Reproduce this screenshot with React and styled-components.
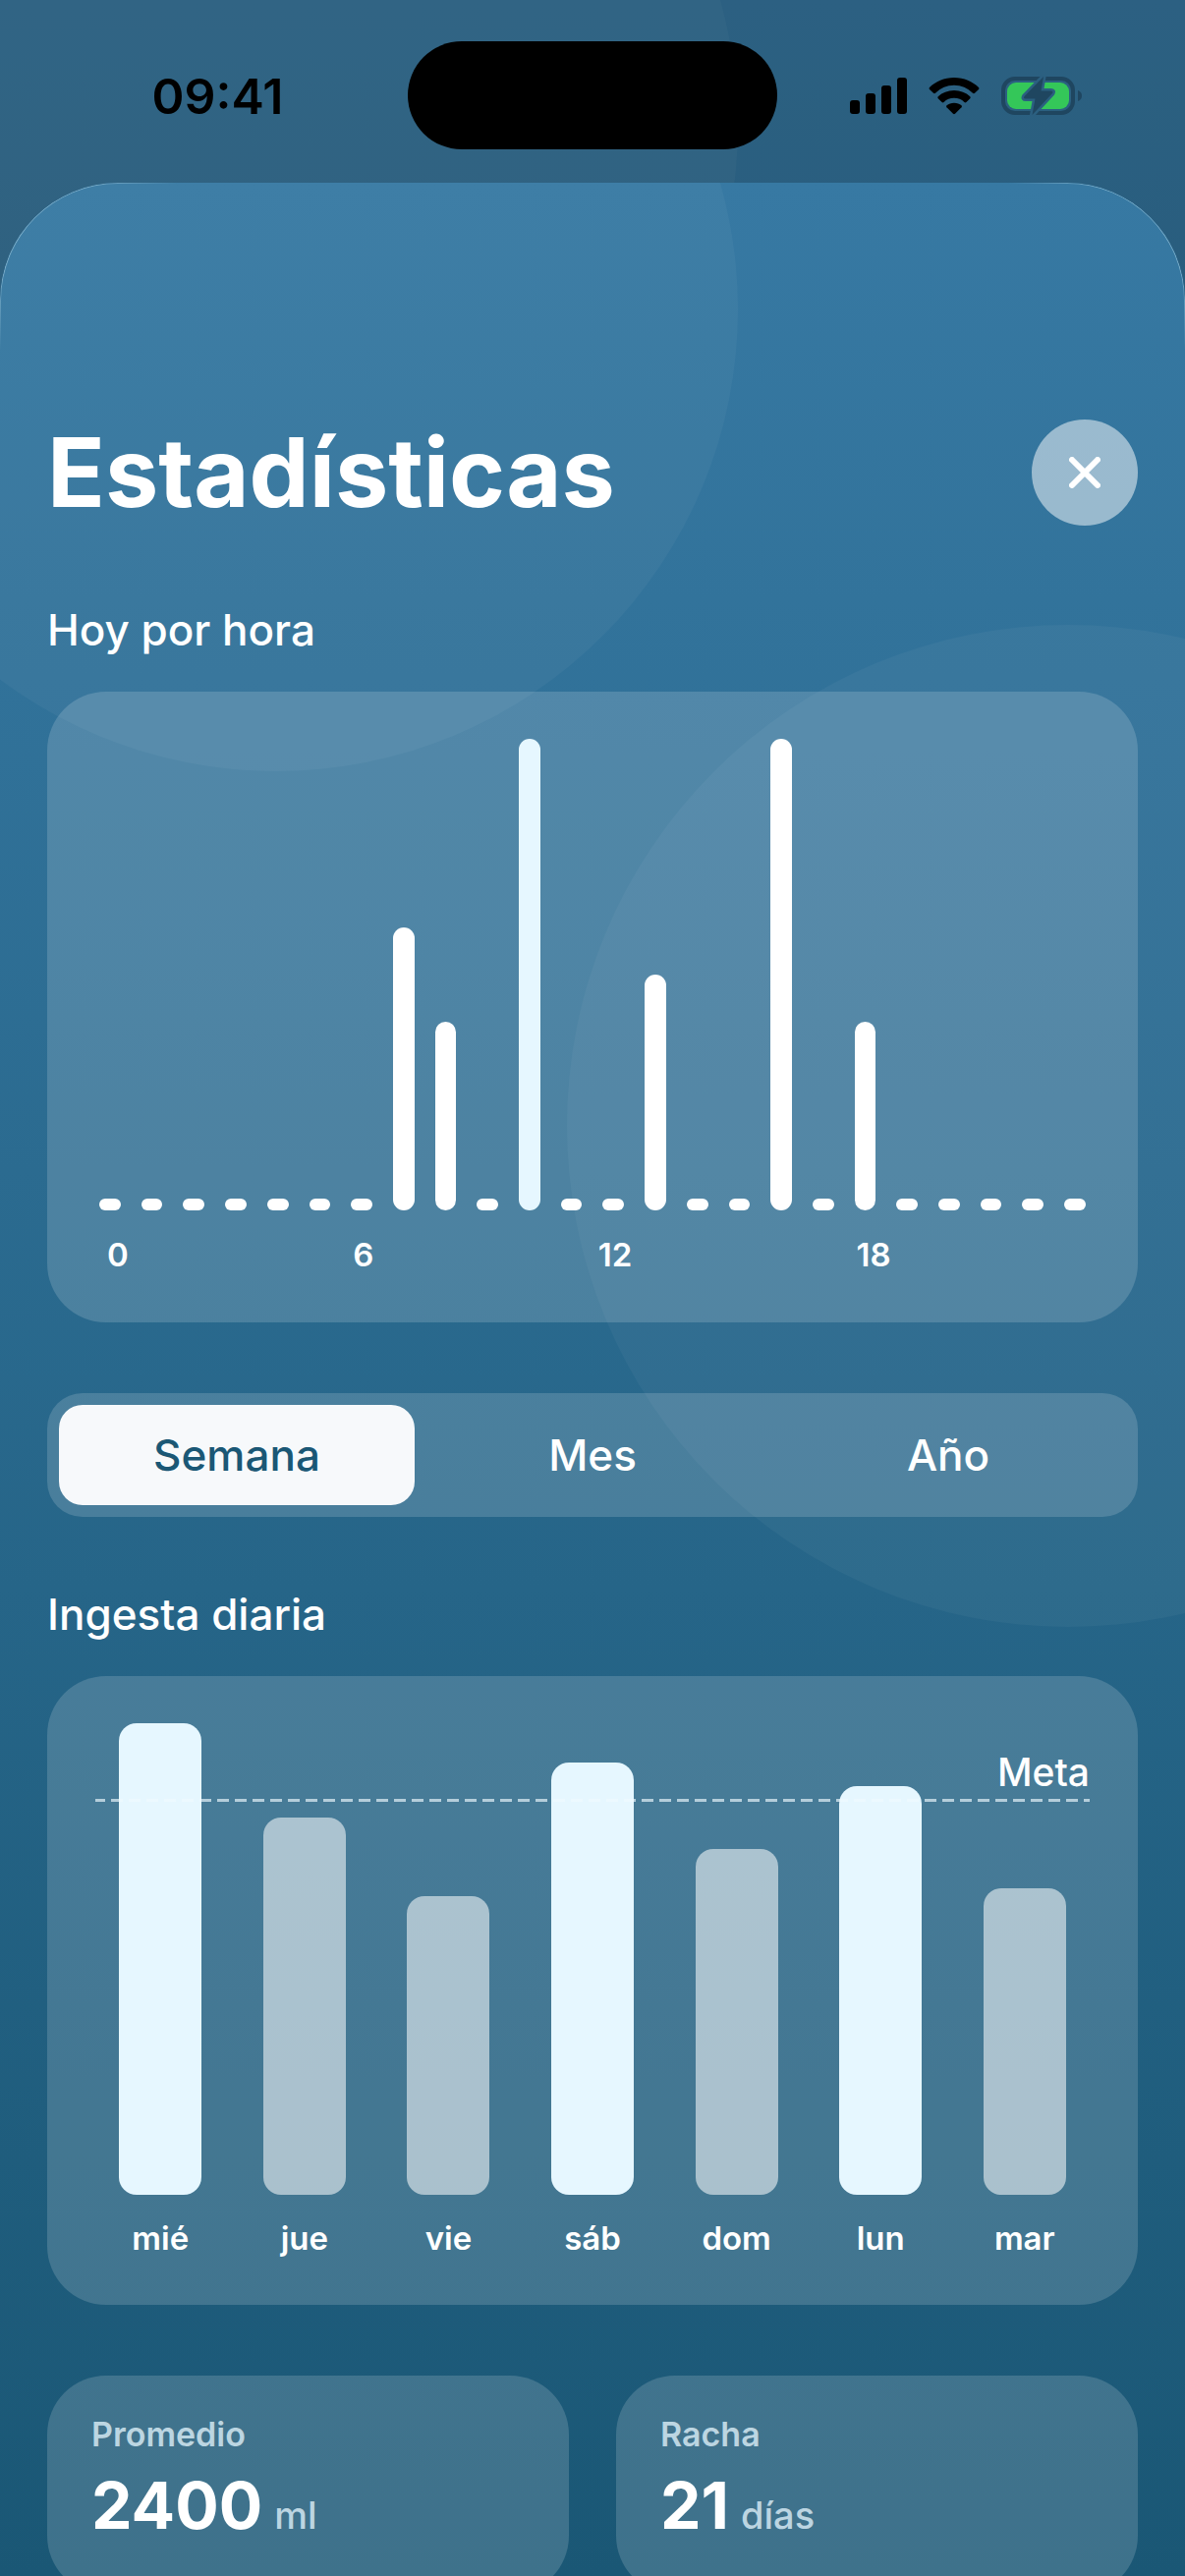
import React, { useState } from "react";
import styled, { createGlobalStyle } from "styled-components";

const hours = Array.from({ length: 24 }, (_, hour) => ({ hour, value: 0 }));
hours[7].value = 60;
hours[8].value = 40;
hours[10].value = 100;
hours[13].value = 50;
hours[16].value = 100;
hours[18].value = 40;

const currentHour = 10;
const goal = 2500;
const maxIntake = 3000;

const days = [
  { day: "mié", ml: 3000 },
  { day: "jue", ml: 2400 },
  { day: "vie", ml: 1900 },
  { day: "sáb", ml: 2750 },
  { day: "dom", ml: 2200 },
  { day: "lun", ml: 2600 },
  { day: "mar", ml: 1950 },
];

const ranges = ["Semana", "Mes", "Año"];

const stats = [
  { label: "Promedio", value: "2400", unit: "ml" },
  { label: "Racha", value: "21", unit: "días" },
];

const SignalIcon = () => (
  <svg width="58" height="38" viewBox="0 0 58 38" aria-hidden="true">
    <rect x="0" y="23" width="10" height="14" rx="3" />
    <rect x="16" y="16" width="10" height="21" rx="3" />
    <rect x="32" y="8" width="10" height="29" rx="3" />
    <rect x="48" y="0" width="10" height="37" rx="3" />
  </svg>
);

const WifiIcon = () => (
  <svg width="52" height="38" viewBox="0 0 52 38" aria-hidden="true">
    <path d="M26 0C36 0 45 4 51 10Q52 11 51 12L47 15.800Q46 16.500 45 15.800C39.500 10.500 33.500 7.800 26 7.800S12.500 10.500 7 15.800Q6 16.500 5 15.800L1 12Q0 11 1 10C7 4 16 0 26 0Z" />
    <path d="M26 13C32.500 13 38 15.300 42.300 19.200Q43.200 20.200 42.300 21.200L38.400 25Q37.400 25.800 36.400 25C33.600 22.200 30.200 20.800 26 20.800S18.400 22.200 15.600 25Q14.600 25.800 13.600 25L9.700 21.200Q8.800 20.200 9.700 19.200C14 15.300 19.500 13 26 13Z" />
    <path d="M26 25.800C29 25.800 31.500 26.800 33.500 28.300Q34.500 29.300 33.500 30.300L27 36.700Q26 37.600 25 36.700L18.500 30.300Q17.500 29.300 18.500 28.300C20.500 26.800 23 25.800 26 25.800Z" />
  </svg>
);

const BatteryIcon = () => (
  <svg width="82" height="42" viewBox="0 0 82 42" aria-hidden="true">
    <rect x="2" y="3" width="71" height="35" rx="12" fill="none" stroke="#1f4660" strokeWidth="4" />
    <path d="M78 15C81 16 82 18 82 20.500S81 25 78 26Z" fill="#1f4660" />
    <rect x="6" y="7" width="63" height="27" rx="9" fill="#34c759" />
    <path
      d="M43 1L23.500 21Q22 23.500 25 23.500H34.500L31.500 40L52 18Q53.500 15.500 50.500 15.500H40.500Z"
      fill="#1f4660"
      stroke="#2b5f80"
      strokeWidth="5"
      strokeLinejoin="round"
      paintOrder="stroke"
    />
  </svg>
);

const CloseIcon = () => (
  <svg width="32" height="32" viewBox="0 0 32 32" aria-hidden="true">
    <path d="M3 3L29 29M29 3L3 29" stroke="#fff" strokeWidth="6" strokeLinecap="round" />
  </svg>
);

const App = () => {
  const [range, setRange] = useState("Semana");

  return (
    <Screen>
      <GlobalStyle />
      <Backdrop>
        <TopBubble />
      </Backdrop>
      <StatusBar>
        <Time>09:41</Time>
        <Island />
        <StatusIcons>
          <SignalIcon />
          <WifiIcon />
          <BatteryIcon />
        </StatusIcons>
      </StatusBar>
      <Sheet>
        <TopBubble />
        <SideBubble />
        <Content>
          <Header>
            <Title>Estadísticas</Title>
            <CloseButton type="button" aria-label="Cerrar">
              <CloseIcon />
            </CloseButton>
          </Header>

          <SectionTitle>Hoy por hora</SectionTitle>
          <ChartCard>
            <HourBars>
              {hours.map(({ hour, value }) => (
                <HourBar key={hour} $current={hour === currentHour} style={{ height: `${value}%` }} />
              ))}
            </HourBars>
            <HourLabels>
              {hours.map(({ hour }) => (
                <HourLabel key={hour}>{hour % 6 === 0 ? hour : ""}</HourLabel>
              ))}
            </HourLabels>
          </ChartCard>

          <Segments>
            {ranges.map((name) => (
              <Segment
                key={name}
                type="button"
                aria-pressed={range === name}
                $active={range === name}
                onClick={() => setRange(name)}
              >
                {name}
              </Segment>
            ))}
          </Segments>

          <SectionTitle>Ingesta diaria</SectionTitle>
          <ChartCard>
            <DayBars>
              {days.map(({ day, ml }) => (
                <DayColumn key={day}>
                  <DayBar $reached={ml >= goal} style={{ height: `${(ml / maxIntake) * 100}%` }} />
                </DayColumn>
              ))}
              <Goal style={{ bottom: `${(goal / maxIntake) * 100}%` }}>
                <GoalLabel>Meta</GoalLabel>
                <GoalLine />
              </Goal>
            </DayBars>
            <DayLabels>
              {days.map(({ day }) => (
                <DayLabel key={day}>{day}</DayLabel>
              ))}
            </DayLabels>
          </ChartCard>

          <Stats>
            {stats.map(({ label, value, unit }) => (
              <StatCard key={label}>
                <StatLabel>{label}</StatLabel>
                <StatValue>
                  {value}
                  <StatUnit>{unit}</StatUnit>
                </StatValue>
              </StatCard>
            ))}
          </Stats>
        </Content>
      </Sheet>
    </Screen>
  );
};

export default App;

const GlobalStyle = createGlobalStyle`
  * {
    box-sizing: border-box;
  }
  body {
    margin: 0;
    font-family: Inter, "Liberation Sans", sans-serif;
    color: #fff;
  }
`;

const Screen = styled.div`
  position: relative;
  display: flex;
  flex-direction: column;
  height: 100vh;
  overflow: hidden;
`;

const Backdrop = styled.div`
  position: absolute;
  inset: 0;
  overflow: hidden;
  background: linear-gradient(#3779a3, #1a5775);

  &::after {
    content: "";
    position: absolute;
    inset: 0;
    background: rgba(0, 0, 0, 0.2);
  }
`;

const Bubble = styled.div`
  position: absolute;
  border-radius: 50%;
  background: rgba(255, 255, 255, 0.04);
`;

const TopBubble = styled(Bubble)`
  top: -341px;
  left: -189px;
  width: 940px;
  height: 940px;
`;

const SideBubble = styled(Bubble)`
  top: 450px;
  right: -391px;
  width: 1020px;
  height: 1020px;
`;

const StatusBar = styled.div`
  position: relative;
  flex: none;
  display: grid;
  grid-template-columns: 1fr 376px 1fr;
  align-items: center;
  height: 186px;
  padding: 8px 0 0;
`;

const Time = styled.div`
  padding: 2px 0 0 28px;
  text-align: center;
  font-size: 50px;
  line-height: 60px;
  font-weight: 600;
  color: #000;
`;

const Island = styled.div`
  height: 110px;
  border-radius: 55px;
  background: #000;
`;

const StatusIcons = styled.div`
  display: flex;
  align-items: center;
  justify-content: center;
  gap: 22px;
  padding: 2px 32px 0 0;
`;

const Sheet = styled.main`
  position: relative;
  flex: 1;
  overflow: hidden;
  border-radius: 120px 120px 0 0;
  background: linear-gradient(#3779a3, #1a5775);

  &::after {
    content: "";
    position: absolute;
    inset: 0 0 auto;
    height: 170px;
    border: 1px solid rgba(190, 225, 240, 0.5);
    border-bottom: 0;
    border-radius: 120px 120px 0 0;
    mask-image: linear-gradient(
        to right,
        #000 80px,
        transparent 180px,
        transparent calc(100% - 180px),
        #000 calc(100% - 80px)
      ),
      linear-gradient(#000 90px, transparent);
    mask-composite: intersect;
    pointer-events: none;
  }
`;

const Content = styled.div`
  position: relative;
  display: flex;
  flex-direction: column;
  height: 100%;
  padding: 241px 48px 0;
  overflow-y: auto;
  scrollbar-width: none;
`;

const Header = styled.header`
  flex: none;
  display: flex;
  align-items: center;
  justify-content: space-between;
  margin-bottom: 79px;
`;

const Title = styled.h1`
  margin: 0;
  font-size: 97px;
  line-height: 108px;
  font-weight: 700;
`;

const CloseButton = styled.button`
  display: flex;
  align-items: center;
  justify-content: center;
  width: 108px;
  height: 108px;
  padding: 0;
  border: 0;
  border-radius: 50%;
  background: rgba(255, 255, 255, 0.5);
  cursor: pointer;
`;

const SectionTitle = styled.h2`
  flex: none;
  margin: 0 0 36px;
  font-size: 44px;
  line-height: 54px;
  font-weight: 500;
`;

const Card = styled.section`
  flex: none;
  border-radius: 60px;
  background: rgba(255, 255, 255, 0.16);
`;

const ChartCard = styled(Card)`
  display: flex;
  flex-direction: column;
  gap: 24px;
  margin-bottom: 72px;
  padding: 48px 42px;
`;

const HourBars = styled.div`
  display: flex;
  align-items: flex-end;
  gap: 21px;
  height: 480px;
  padding: 0 11px;
`;

const HourBar = styled.div`
  flex: 1;
  min-height: 12px;
  border-radius: 11px;
  background: ${({ $current }) => ($current ? "#e6f7ff" : "#fff")};
`;

const HourLabels = styled.div`
  display: flex;
`;

const HourLabel = styled.span`
  flex: 1 1 auto;
  text-align: center;
  font-size: 33px;
  line-height: 42px;
  font-weight: 600;
`;

const Segments = styled.div`
  flex: none;
  display: flex;
  margin-bottom: 72px;
  padding: 12px;
  border-radius: 36px;
  background: rgba(255, 255, 255, 0.16);
`;

const Segment = styled.button`
  flex: 1;
  height: 102px;
  padding: 0;
  border: 0;
  border-radius: 24px;
  background: ${({ $active }) => ($active ? "#f7f9fb" : "transparent")};
  color: ${({ $active }) => ($active ? "#1a5775" : "#fff")};
  font-family: inherit;
  font-size: 44px;
  font-weight: 500;
  cursor: pointer;
`;

const DayBars = styled.div`
  position: relative;
  display: flex;
  height: 480px;
`;

const DayColumn = styled.div`
  flex: 1;
  display: flex;
  align-items: flex-end;
  justify-content: center;
`;

const DayBar = styled.div`
  width: 84px;
  border-radius: 18px;
  background: ${({ $reached }) => ($reached ? "#e6f7ff" : "rgba(255, 255, 255, 0.55)")};
`;

const Goal = styled.div`
  position: absolute;
  left: 7px;
  right: 7px;
  display: flex;
  flex-direction: column;
  gap: 3px;
`;

const GoalLabel = styled.span`
  text-align: right;
  font-size: 39px;
  line-height: 48px;
  font-weight: 500;
`;

const GoalLine = styled.div`
  height: 3px;
  background: repeating-linear-gradient(
    to right,
    rgba(240, 250, 255, 0.65) 0 10px,
    transparent 10px 16px,
    rgba(240, 250, 255, 0.65) 16px 18px
  );
`;

const DayLabels = styled.div`
  display: flex;
`;

const DayLabel = styled.span`
  flex: 1;
  text-align: center;
  font-size: 33px;
  line-height: 40px;
  font-weight: 600;
`;

const Stats = styled.div`
  flex: none;
  display: grid;
  grid-template-columns: 1fr 1fr;
  gap: 48px;
`;

const StatCard = styled(Card)`
  display: flex;
  flex-direction: column;
  gap: 16px;
  padding: 40px 45px 45px;
`;

const StatLabel = styled.span`
  font-size: 34px;
  line-height: 40px;
  font-weight: 600;
  color: rgba(230, 247, 255, 0.75);
`;

const StatValue = styled.div`
  display: flex;
  align-items: baseline;
  gap: 12px;
  font-size: 66px;
  line-height: 72px;
  font-weight: 700;
`;

const StatUnit = styled.span`
  font-size: 38px;
  font-weight: 500;
  color: rgba(230, 247, 255, 0.75);
`;
